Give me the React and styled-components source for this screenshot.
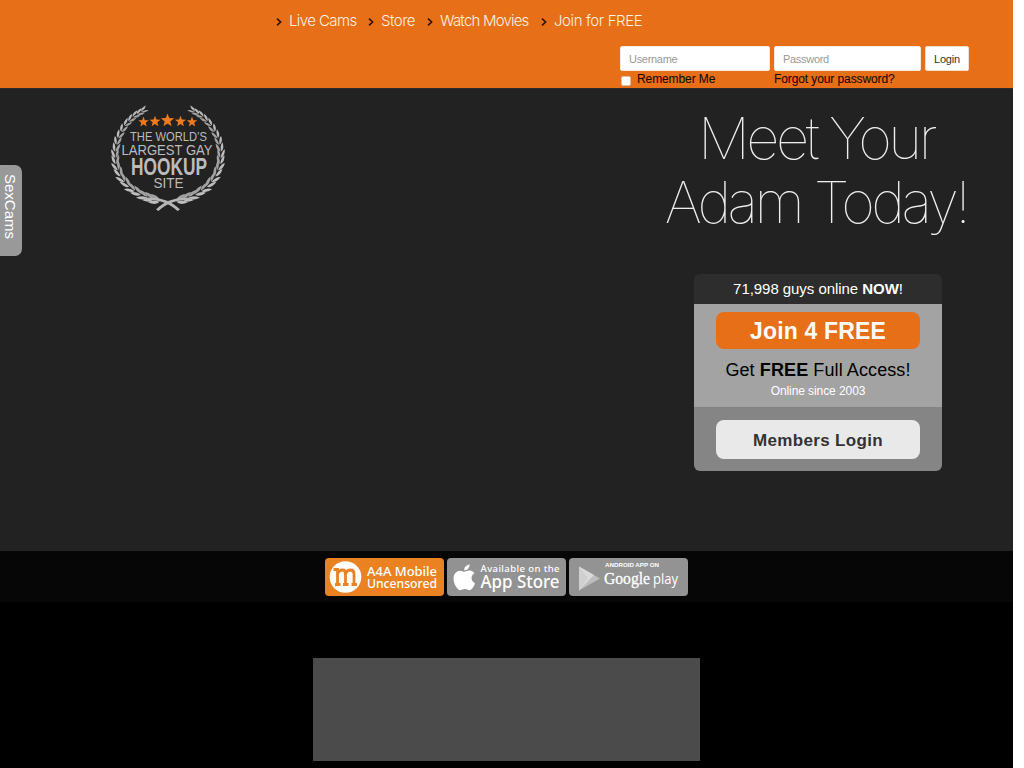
import React from "react";
import styled, { createGlobalStyle } from "styled-components";

const Global = createGlobalStyle`
  *{box-sizing:border-box}
  html{background:#fff}
  body{margin:0;overflow:hidden;font-family:"Liberation Sans",Arial,sans-serif}
`;
const Page = styled.div`
  width:1013px;height:768px;background:#000;overflow:hidden;position:relative;
`;
const Header = styled.header`
  height:88px;background:#e66f17;display:flex;flex-direction:column;
`;
const Nav = styled.nav`
  height:46px;padding:11px 0 0 276px;display:flex;
`;
const NavItem = styled.a`
  width:${p => p.$w}px;height:20px;display:flex;align-items:center;gap:7px;
  font:300 15px/20px Inter,"Liberation Sans",sans-serif;
  letter-spacing:${p => p.$ls}px;color:#fff0df;white-space:nowrap;
  svg{flex:none;margin-top:2px}
`;
const LoginForm = styled.form`
  margin-left:620px;display:grid;grid-template-columns:150px 147px 44px;
  grid-template-rows:25px 17px;column-gap:4px;
`;
const Field = styled.input`
  width:100%;height:25px;border:1px solid #f7e8dc;border-radius:2px;background:#fff;
  padding:0 8px;font:11px "Liberation Sans",sans-serif;outline:0;letter-spacing:-.3px;
  &::placeholder{color:#999;opacity:1}
`;
const LoginButton = styled.button`
  height:25px;border:1px solid #f3ddcd;border-radius:2px;background:#fff;color:#333;
  padding:0;font:11px "Liberation Sans",sans-serif;letter-spacing:-.2px;
`;
const Remember = styled.label`
  display:flex;align-items:center;font-size:12px;line-height:17px;color:#1b0b00;gap:6px;
  letter-spacing:-.1px;-webkit-text-stroke:.1px #1b0b00;
`;
const Check = styled.input`
  appearance:none;width:10px;height:10px;margin:2px 0 0 1px;border-radius:2px;background:#fff;border:1px solid #ddc0ac;
`;
const Hero = styled.main`
  height:463px;background:#222;display:flex;justify-content:space-between;
  padding:0 27px 0 108px;border-top:1px solid #302a28;
`;
const Emblem = styled.svg`
  display:block;width:120px;height:112px;margin-top:14px;
`;
const Offer = styled.section`
  width:336px;display:flex;flex-direction:column;align-items:center;
`;
const Heading = styled.h1`
  margin:17px 0 0;padding-right:4px;height:168px;font:100 58px/64px Inter,"Liberation Sans",sans-serif;color:#eee;
`;
const HeadingLine = styled.span`
  display:block;text-align:center;white-space:nowrap;letter-spacing:${p => p.$ls}px;
`;
const Card = styled.div`
  width:248px;height:197px;border-radius:6px;overflow:hidden;text-align:center;
`;
const CardTop = styled.div`
  height:30px;background:#2d2d2d;color:#fff;font-size:15px;line-height:30px;letter-spacing:-.05px;
`;
const CardMiddle = styled.div`
  height:103px;background:#a3a3a3;padding:8px 22px 0;display:flex;flex-direction:column;
`;
const CardBottom = styled.div`
  height:64px;background:#858585;padding:13px 22px;
`;
const Action = styled.button`
  display:block;width:204px;height:${p => p.$light ? 39 : 37}px;border:0;border-radius:8px;padding:2px 0 0;
  background:${p => p.$light ? "#e9e9e9" : "#e66f17"};color:${p => p.$light ? "#333" : "#fff"};
  font:bold ${p => p.$light ? 17 : 23}px "Liberation Sans",sans-serif;
  letter-spacing:${p => p.$light ? .35 : .15}px;
`;
const Access = styled.div`
  font-size:18px;line-height:24px;margin-top:9px;color:#000;white-space:nowrap;letter-spacing:.1px;
`;
const Since = styled.div`
  font-size:12px;line-height:18px;color:#fff;letter-spacing:-.08px;
`;
const Apps = styled.section`
  height:51px;background:#060606;display:flex;padding:7px 0 0 325px;gap:3px;
`;
const Badge = styled.svg`
  display:block;width:119px;height:38px;border-radius:4px;background:${p => p.$bg};flex:none;
`;
const Banner = styled.div`
  width:387px;height:103px;background:#4b4b4b;margin:56px 0 0 313px;
`;
const SideTab = styled.a`
  position:absolute;left:0;top:165px;width:22px;height:91px;border-radius:0 7px 7px 0;background:#999;
  color:#fff;writing-mode:vertical-rl;font-size:15px;line-height:18px;padding:9px 3px 0 0;
`;

const Chevron = () => (
  <svg width="6" height="8" viewBox="0 0 6 8" fill="none" stroke="#301300" strokeWidth="1.6"><path d="M1 .7 4.6 4 1 7.3" /></svg>
);

const star = (cx, cy, r) => Array.from({ length: 10 }, (_, i) => {
  const a = -Math.PI / 2 + (i * Math.PI) / 5, q = i % 2 ? r * 0.42 : r;
  return `${cx + q * Math.cos(a)},${cy + q * Math.sin(a)}`;
}).join(" ");

/* Centre line of a laurel branch, from the stem up to the tip. */
const spine = [[49, 97.5], [36, 93], [23, 85.5], [13.500, 75], [8, 62], [7, 49], [10, 35], [17, 22], [26, 13], [35, 7.5]];
const LEAVES = 20;
const leafAt = i => {
  const t = (i / (LEAVES - 1)) * (spine.length - 1.01);
  const k = Math.floor(t), f = t - k;
  const [ax, ay] = spine[k], [bx, by] = spine[k + 1];
  return { x: ax + (bx - ax) * f, y: ay + (by - ay) * f, deg: (Math.atan2(by - ay, bx - ax) * 180) / Math.PI, s: 1 - (i / LEAVES) * 0.38 };
};

const Branch = () => (
  <g>
    {Array.from({ length: LEAVES }, (_, i) => {
      const { x, y, deg, s } = leafAt(i);
      return (
        <g key={i} transform={`translate(${x} ${y}) rotate(${deg}) scale(${s})`}>
          <path d="M-3 -.3Q-.5 -5.500 8 -4.500Q5 -.3 -3 -.3Z" fill="#bdbdbd" />
          <path d="M-3 .3Q-.5 5.500 8 4.500Q5 .3 -3 .3Z" fill="#a2a2a2" />
        </g>
      );
    })}
    <path d="M38 94.500C54 94 65 99 72 106.500L69.500 108C61 100 52 97 38 96.500Z" fill="#b5b5b5" />
  </g>
);

const font = { fontFamily: '"Liberation Sans",Arial,sans-serif' };
const Logo = () => (
  <Emblem viewBox="0 0 120 112">
    <Branch />
    <g transform="translate(120 0) scale(-1 1)"><Branch /></g>
    <g fill="#f07a1d">
      {[[35.500, 19, 5.500], [47, 18.500, 5.800], [59.500, 17.500, 7], [72.500, 18.500, 5.800], [84, 19, 5.500]].map((s, i) => <polygon key={i} points={star(...s)} />)}
    </g>
    <g fill="#bcbcbc" textAnchor="middle" style={font}>
      <text x="60.500" y="38" fontSize="13" textLength="77" lengthAdjust="spacingAndGlyphs">THE WORLD’S</text>
      <text x="59" y="51.800" fontSize="15.500" textLength="91" lengthAdjust="spacingAndGlyphs">LARGEST GAY</text>
      <text x="61" y="71.500" fontSize="23" fontWeight="bold" textLength="76" lengthAdjust="spacingAndGlyphs">HOOKUP</text>
      <text x="60.500" y="85" fontSize="14" textLength="30" lengthAdjust="spacingAndGlyphs">SITE</text>
    </g>
  </Emblem>
);

const MobileBadge = () => (
  <Badge $bg="#eb8221" viewBox="0 0 119 38" fill="#fff" fontFamily='"Noto Sans",sans-serif'>
    <circle cx="20.500" cy="19" r="15.800" />
    <path d="M8.500 11.500H12.500V26M12.500 16Q14 12 17.500 12Q20.500 12 20.500 16V26M20.500 16Q22 12 25.500 12Q29 12 29 16V26M10 26.500H15.500M18 26.500H23.500M26.500 26.500H32" fill="none" stroke="#eb8221" strokeWidth="2.800" />
    <text x="42" y="17.500" fontSize="13" fontWeight="500" textLength="70" lengthAdjust="spacingAndGlyphs">A4A Mobile</text>
    <text x="42" y="30" fontSize="13" fontWeight="500" textLength="70" lengthAdjust="spacingAndGlyphs">Uncensored</text>
  </Badge>
);

const AppleBadge = () => (
  <Badge $bg="#929292" viewBox="0 0 119 38" fill="#fff" fontFamily='"Noto Sans",sans-serif'>
    <path transform="translate(1.400 3.800) scale(1.330 1.290)" d="M18.710 19.500c-.83 1.240-1.710 2.450-3.050 2.470-1.340.03-1.770-.79-3.290-.79-1.530 0-2 .77-3.270.82-1.310.05-2.300-1.320-3.140-2.530C4.250 17 2.940 12.450 4.700 9.390c.87-1.520 2.430-2.480 4.120-2.510 1.280-.02 2.500.87 3.290.87.78 0 2.260-1.070 3.810-.91.65.03 2.470.26 3.640 1.980-.09.06-2.170 1.280-2.150 3.810.03 3.020 2.650 4.030 2.680 4.040-.03.07-.42 1.440-1.380 2.830M13 3.500c.73-.83 1.940-1.460 2.940-1.500.13 1.170-.34 2.350-1.040 3.190-.69.85-1.830 1.510-2.950 1.420-.15-1.150.41-2.350 1.050-3.110z" />
    <text x="33.500" y="13.500" fontSize="9.500" fontWeight="500" textLength="79" lengthAdjust="spacing">Available on the</text>
    <text x="33.500" y="30" fontSize="18" fontWeight="500" textLength="79" lengthAdjust="spacingAndGlyphs">App Store</text>
  </Badge>
);

const PlayBadge = () => (
  <Badge $bg="#939393" viewBox="0 0 119 38" fill="#fff">
    <path d="M10 8.500 31 20.500 10 32.500Z" fill="#bdbdbd" />
    <path d="M10 8.500 25 17 10 32.500Z" fill="#dadada" />
    <path d="M10 8.500 19 20 10 32.500Z" fill="#cfcfcf" />
    <text x="36" y="9" fontSize="5.500" fontWeight="bold" textLength="54" lengthAdjust="spacingAndGlyphs" fontFamily='"Liberation Sans",sans-serif'>ANDROID APP ON</text>
    <text x="35" y="26" fontSize="16" textLength="46" lengthAdjust="spacingAndGlyphs" stroke="#fff" strokeWidth=".3" fontFamily='"Liberation Serif",serif'>Google</text>
    <text x="84" y="26" fontSize="14.500" textLength="25" lengthAdjust="spacingAndGlyphs" fontFamily='"Open Sans",sans-serif'>play</text>
  </Badge>
);

const links = [["Live Cams", 92, -0.6], ["Store", 59, -0.5], ["Watch Movies", 114, -0.8], ["Join for FREE", 110, -0.4]];

export default function App() {
  return (
    <>
      <Global />
      <Page>
        <Header>
          <Nav>
            {links.map(([t, w, ls]) => <NavItem key={t} $w={w} $ls={ls}><Chevron />{t}</NavItem>)}
          </Nav>
          <LoginForm onSubmit={e => e.preventDefault()}>
            <Field placeholder="Username" />
            <Field placeholder="Password" type="password" />
            <LoginButton>Login</LoginButton>
            <Remember><Check type="checkbox" />Remember Me</Remember>
            <Remember as="a">Forgot your password?</Remember>
          </LoginForm>
        </Header>
        <Hero>
          <Logo />
          <Offer>
            <Heading>
              <HeadingLine $ls={-3.5}>Meet Your</HeadingLine>
              <HeadingLine $ls={-3.6}>Adam Today!</HeadingLine>
            </Heading>
            <Card>
              <CardTop>71,998 guys online <b>NOW</b>!</CardTop>
              <CardMiddle>
                <Action>Join 4 FREE</Action>
                <Access>Get <b>FREE</b> Full Access!</Access>
                <Since>Online since 2003</Since>
              </CardMiddle>
              <CardBottom><Action $light>Members Login</Action></CardBottom>
            </Card>
          </Offer>
        </Hero>
        <Apps><MobileBadge /><AppleBadge /><PlayBadge /></Apps>
        <Banner />
        <SideTab>SexCams</SideTab>
      </Page>
    </>
  );
}
